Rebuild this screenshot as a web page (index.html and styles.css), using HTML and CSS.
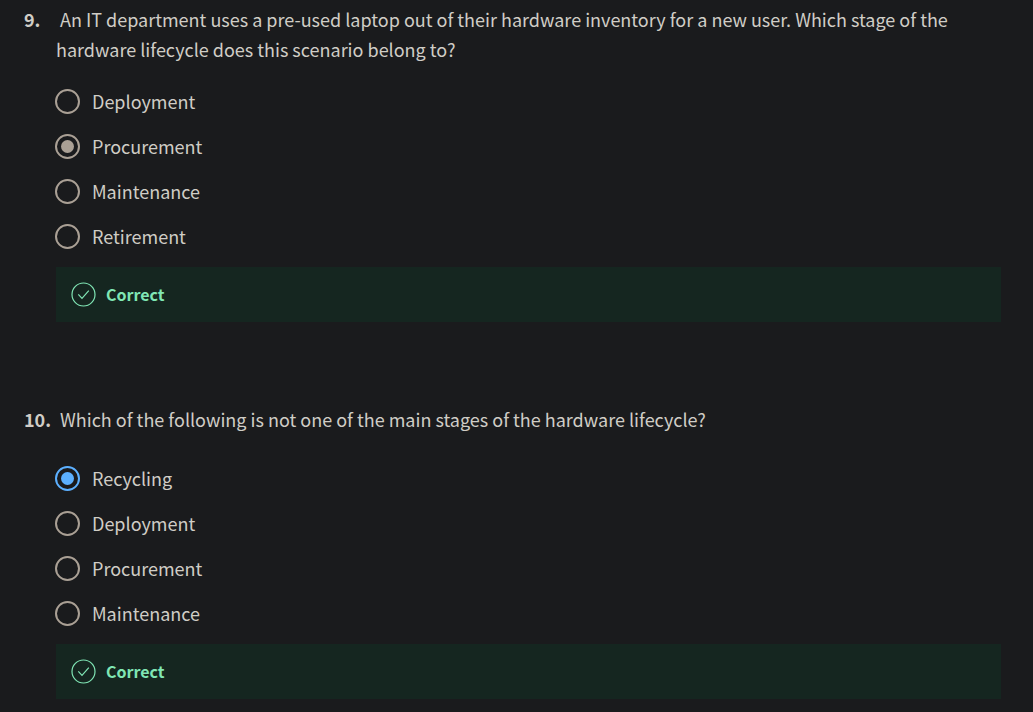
FILE: index.html
```html
<!DOCTYPE html>
<html lang="en">
<head>
<meta charset="utf-8">
<title>Hardware lifecycle quiz</title>
<link rel="stylesheet" href="styles.css">
</head>
<body>
<form class="quiz">
  <fieldset class="question" aria-labelledby="q9">
    <div class="prompt" id="q9"><span class="number">9.</span><p class="text">An IT department uses a pre-used laptop out of their hardware inventory for a new user. Which stage of the hardware lifecycle does this scenario belong to?</p></div>
    <div class="answers">
      <label class="option"><input class="radio" type="radio" name="q9"><span>Deployment</span></label>
      <label class="option"><input class="radio" type="radio" name="q9" checked><span>Procurement</span></label>
      <label class="option"><input class="radio" type="radio" name="q9"><span>Maintenance</span></label>
      <label class="option"><input class="radio" type="radio" name="q9"><span>Retirement</span></label>
    </div>
    <div class="feedback">
      <svg class="check" viewBox="0 0 25 25" aria-hidden="true"><circle cx="12.5" cy="12.5" r="11.5"/><path d="M7.3 12.4l3.7 4 6.8-7.8"/></svg>
      <strong>Correct</strong>
    </div>
  </fieldset>
  <fieldset class="question" aria-labelledby="q10">
    <div class="prompt prompt-single" id="q10"><span class="number">10.</span><p class="text">Which of the following is not one of the main stages of the hardware lifecycle?</p></div>
    <div class="answers">
      <label class="option"><input class="radio active" type="radio" name="q10" checked><span>Recycling</span></label>
      <label class="option"><input class="radio" type="radio" name="q10"><span>Deployment</span></label>
      <label class="option"><input class="radio" type="radio" name="q10"><span>Procurement</span></label>
      <label class="option"><input class="radio" type="radio" name="q10"><span>Maintenance</span></label>
    </div>
    <div class="feedback">
      <svg class="check" viewBox="0 0 25 25" aria-hidden="true"><circle cx="12.5" cy="12.5" r="11.5"/><path d="M7.3 12.4l3.7 4 6.8-7.8"/></svg>
      <strong>Correct</strong>
    </div>
  </fieldset>
</form>
</body>
</html>
```
FILE: styles.css
```css
* { box-sizing: border-box; }
body {
  margin: 0;
  background: #1a1b1d;
  color: #d0cdc6;
  font: 18px/30px "Noto Sans CJK SC", "Noto Sans", sans-serif;
}
.quiz {
  display: flex;
  flex-direction: column;
  gap: 82px;
  padding: 4px 32px 13px 24px;
}
.question {
  min-width: 0;
  margin: 0;
  padding: 0;
  border: 0;
}
.prompt {
  padding-left: 32px;
}
.prompt-single { padding-bottom: 7px; }
.number {
  display: inline-block;
  min-width: 36px;
  margin-left: -32px;
  font-weight: 700;
}
.text { display: inline; margin: 0; }
.answers {
  display: flex;
  flex-direction: column;
  gap: 15px;
  padding: 22px 0 16px 31px;
}
.option {
  display: flex;
  align-items: center;
  gap: 12px;
  width: fit-content;
}
.radio {
  appearance: none;
  display: grid;
  place-items: center;
  width: 25px;
  height: 25px;
  margin: 0;
  border: 2px solid #aaa095;
  border-radius: 50%;
  color: #aaa095;
}
.radio:checked::before {
  content: "";
  width: 13px;
  height: 13px;
  border-radius: 50%;
  background: currentColor;
}
.active {
  border-color: #5cb0ff;
  color: #5cb0ff;
}
.feedback {
  display: flex;
  align-items: center;
  gap: 10px;
  margin-left: 32px;
  padding: 15px;
  background: #152620;
  color: #80e6b5;
  font-size: 16px;
  line-height: 25px;
}
.check {
  width: 25px;
  height: 25px;
  fill: none;
  stroke: currentColor;
  stroke-width: 1.2;
}
```
